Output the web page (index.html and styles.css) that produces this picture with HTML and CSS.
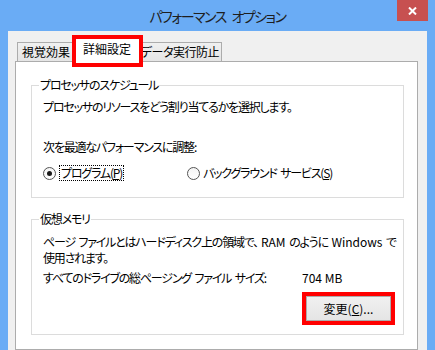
FILE: index.html
```html
<!DOCTYPE html>
<html lang="ja">
<head>
    <meta charset="UTF-8" />
    <title>パフォーマンス オプション</title>
    <link rel="stylesheet" href="styles.css">
</head>
<body>
<div class="window">
    <div class="titlebar">
        <div class="title">パフォーマンス オプション</div>
        <button class="close-btn" aria-label="閉じる">
            <svg width="9" height="8" viewBox="0 0 9 8"><path d="M1 0.5 L8 7.5 M8 0.5 L1 7.5" stroke="#fff" stroke-width="2" fill="none"/></svg>
        </button>
    </div>
    <div class="client">
        <div class="tabs">
            <div class="tab tab-visual">視覚効果</div>
            <div class="tab tab-advanced selected">詳細設定</div>
            <div class="tab tab-dep">データ実行防止</div>
        </div>
        <div class="panel">
            <fieldset class="group group-cpu">
                <legend>プロセッサのスケジュール</legend>
                <p class="first">プロセッサのリソースをどう割り当てるかを選択します。</p>
                <p class="adjust">次を最適なパフォーマンスに調整:</p>
                <div class="radio-row">
                    <label class="radio radio-program checked"><span class="dot"></span><span class="focus">プログラム(<u>P</u>)</span></label>
                    <label class="radio"><span class="dot"></span><span>バックグラウンド サービス(<u>S</u>)</span></label>
                </div>
            </fieldset>
            <fieldset class="group group-mem">
                <legend>仮想メモリ</legend>
                <p class="first nowrap">ページ ファイルとはハードディスク上の領域で、<span class="latin">RAM</span> のように <span class="latin">Windows</span> で<br>使用されます。</p>
                <div class="size-row">
                    <span class="size-label">すべてのドライブの総ページング ファイル サイズ:</span>
                    <span class="latin">704 MB</span>
                </div>
                <div class="btn-row">
                    <button class="btn">変更(<u>C</u>)...</button>
                </div>
            </fieldset>
        </div>
    </div>
</div>
</body>
</html>
```

FILE: styles.css
```css
* {
    box-sizing: border-box;
}
body {
    margin: 0;
    font-family: "Noto Sans CJK JP", "Noto Sans", sans-serif;
    font-size: 12px;
    color: #000;
    font-feature-settings: "palt";
}
.window {
    width: 435px;
    height: 350px;
    background-color: #6aacf5;
    display: flex;
    flex-direction: column;
    overflow: hidden;
}
.titlebar {
    height: 31px;
    flex: none;
    display: grid;
    grid-template-columns: 1fr auto 1fr;
}
.title {
    grid-column: 2;
    font-size: 14px;
    letter-spacing: -1.5px;
    word-spacing: 4px;
    line-height: 31px;
    padding-top: 1px;
    color: #1e1e1e;
}
.close-btn {
    grid-column: 3;
    justify-self: end;
    width: 31px;
    height: 21px;
    margin-right: 7px;
    padding: 0;
    border: none;
    background-color: #c75050;
    display: flex;
    align-items: center;
    justify-content: center;
}
.client {
    flex: 1;
    margin: 0 8px;
    padding: 6px 9px 0 7px;
    background-color: #f0f0f0;
    display: flex;
    flex-direction: column;
}

/* tabs */
.tabs {
    display: flex;
    align-items: flex-end;
    padding-left: 2px;
    margin-bottom: -1px;
    position: relative;
    z-index: 1;
}
.tab {
    height: 19px;
    margin-bottom: 1px;
    border: 1px solid #acacac;
    border-bottom: none;
    background: linear-gradient(#f0f0f0, #e5e5e5);
    text-align: center;
    line-height: 17px;
}
.tab-visual { width: 58px; }
.tab-advanced { width: 66px; margin-left: -1px; }
.tab-dep { width: 84px; margin-left: -1px; letter-spacing: -0.5px; }
.tab.selected {
    height: 25px;
    margin-bottom: 0;
    margin-right: -1px;
    background: #fff;
    line-height: 22px;
    position: relative;
    z-index: 2;
}
.tab.selected::after {
    content: "";
    position: absolute;
    left: -3px;
    right: -4px;
    top: -3px;
    bottom: -5px;
    border: 4px solid #f00;
}

/* panel */
.panel {
    flex: 1;
    background-color: #fff;
    border: 1px solid #acacac;
    padding: 15px 13px 0 15px;
    letter-spacing: -1.2px;
    word-spacing: 2px;
}
.latin {
    margin-left: 3px;
    letter-spacing: 0;
    word-spacing: 0;
}
.latin + .latin,
.size-row .latin {
    margin-left: 0;
}
.group {
    margin: 0;
    min-width: 0;
    padding: 0 8px 16px 7px;
    border: 1px solid #dcdcdc;
}
.group legend {
    padding: 0 1px;
    line-height: 16px;
}
.group p {
    margin: 0;
    padding-left: 4px;
    line-height: 16px;
}
.group-cpu p.first { margin-top: 6px; }
.group-cpu p.adjust { margin-top: 24px; }
.group-mem {
    margin-top: 13px;
    padding-bottom: 13px;
}
.group-mem p.first { margin-top: 7px; }
.nowrap {
    white-space: nowrap;
}

/* radios */
.radio-row {
    display: flex;
    margin-top: 10px;
    padding-left: 4px;
    height: 16px;
}
.radio {
    display: flex;
    align-items: center;
    gap: 3px;
    line-height: 16px;
}
.radio-program {
    width: 144px;
}
.dot {
    width: 13px;
    height: 13px;
    border: 1px solid #555;
    border-radius: 50%;
    background: linear-gradient(#f4f4f4, #fff);
    display: flex;
    align-items: center;
    justify-content: center;
}
.radio.checked .dot::after {
    content: "";
    width: 5px;
    height: 5px;
    border-radius: 50%;
    background-color: #1a1a1a;
}
.focus {
    border: 1px dotted #000;
    padding: 0 1px;
    line-height: 14px;
}

/* virtual memory */
.size-row {
    display: flex;
    margin-top: 4px;
    padding-left: 4px;
    line-height: 16px;
}
.size-label {
    width: 259px;
}
.btn-row {
    display: flex;
    justify-content: flex-end;
    margin-top: 10px;
}
.btn {
    width: 85px;
    height: 25px;
    margin-right: 4px;
    padding: 0;
    border: 1px solid #acacac;
    background: linear-gradient(#f0f0f0, #e5e5e5);
    font: inherit;
    color: #000;
    line-height: 22px;
    letter-spacing: 0;
    outline: 4px solid #f00;
}
```
